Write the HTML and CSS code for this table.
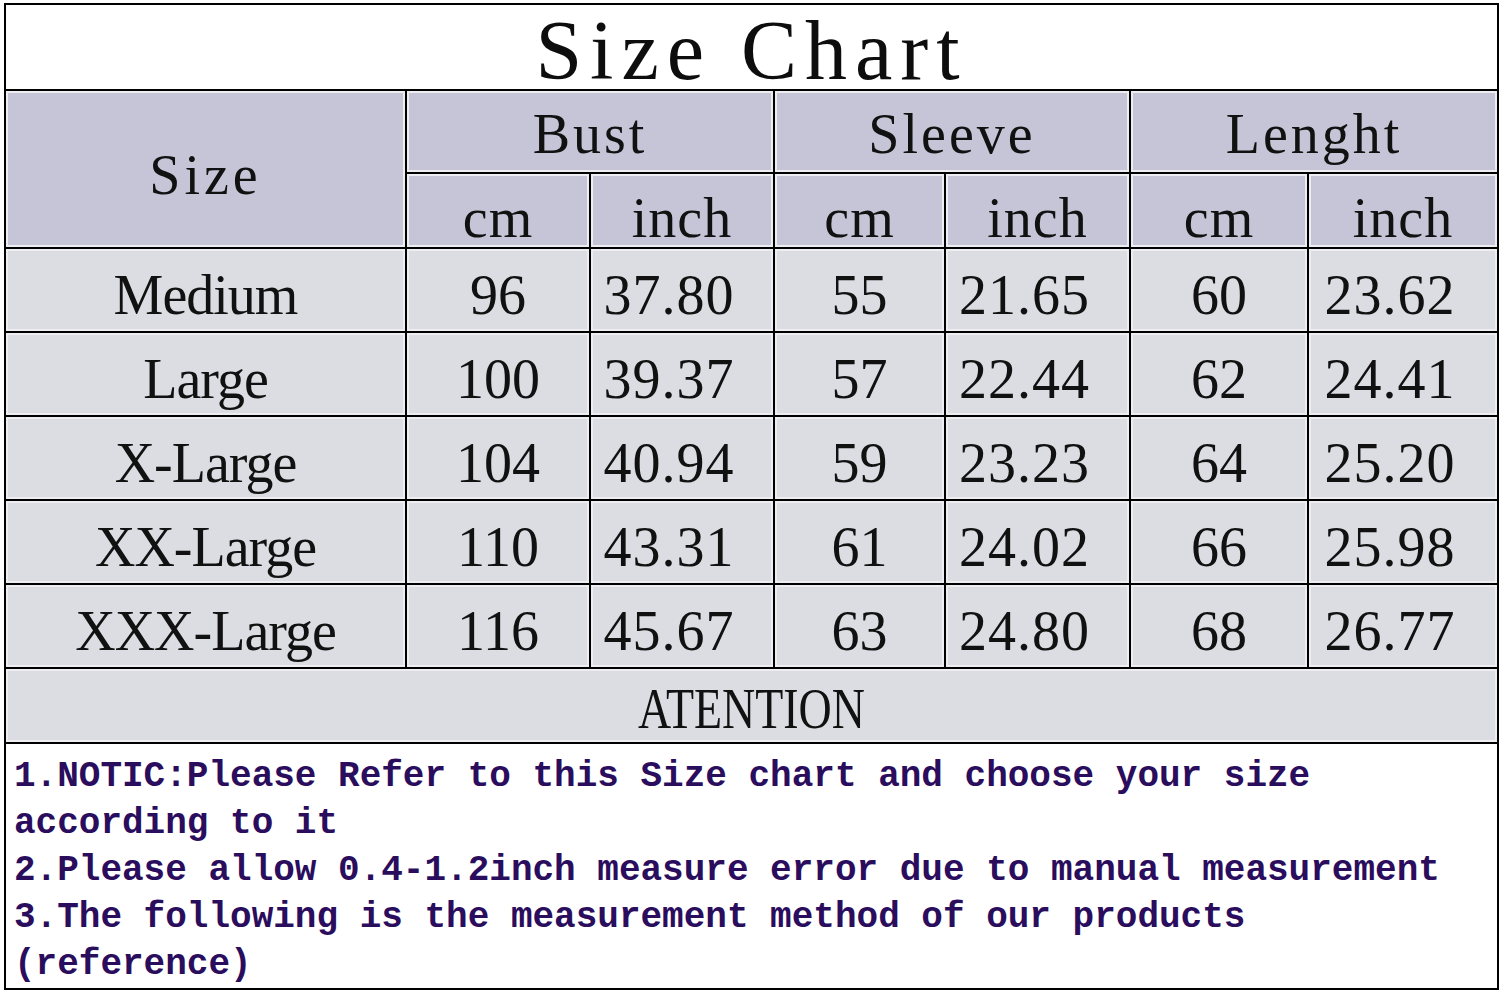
FILE: index.html
```html
<!DOCTYPE html>
<html>
<head>
<meta charset="utf-8">
<link rel="stylesheet" href="styles.css">
</head>
<body>
<div class="page">
<table class="chart">
  <colgroup>
    <col class="c-size"><col class="c-bcm"><col class="c-binch"><col class="c-scm"><col class="c-sinch"><col class="c-lcm"><col class="c-linch">
  </colgroup>
  <tr class="r-title"><td colspan="7" class="title">Size Chart</td></tr>
  <tr class="r-h1">
    <td rowspan="2" class="head size-head">Size</td>
    <td colspan="2" class="head group">Bust</td>
    <td colspan="2" class="head group">Sleeve</td>
    <td colspan="2" class="head group">Lenght</td>
  </tr>
  <tr class="r-h2">
    <td class="head unit">cm</td><td class="head unit">inch</td>
    <td class="head unit">cm</td><td class="head unit">inch</td>
    <td class="head unit">cm</td><td class="head unit">inch</td>
  </tr>
  <tr class="r-data"><td class="name">Medium</td><td class="num">96</td><td class="dec">37.80</td><td class="num">55</td><td class="dec">21.65</td><td class="num">60</td><td class="dec">23.62</td></tr>
  <tr class="r-data"><td class="name">Large</td><td class="num">100</td><td class="dec">39.37</td><td class="num">57</td><td class="dec">22.44</td><td class="num">62</td><td class="dec">24.41</td></tr>
  <tr class="r-data"><td class="name">X-Large</td><td class="num">104</td><td class="dec">40.94</td><td class="num">59</td><td class="dec">23.23</td><td class="num">64</td><td class="dec">25.20</td></tr>
  <tr class="r-data"><td class="name">XX-Large</td><td class="num">110</td><td class="dec">43.31</td><td class="num">61</td><td class="dec">24.02</td><td class="num">66</td><td class="dec">25.98</td></tr>
  <tr class="r-data"><td class="name">XXX-Large</td><td class="num">116</td><td class="dec">45.67</td><td class="num">63</td><td class="dec">24.80</td><td class="num">68</td><td class="dec">26.77</td></tr>
  <tr class="r-att"><td colspan="7" class="attention"><span class="att-text">ATENTION</span></td></tr>
  <tr class="r-notes"><td colspan="7" class="notes">
    <div class="note-line">1.NOTIC:Please Refer to this Size chart and choose your size</div>
    <div class="note-line">according to it</div>
    <div class="note-line">2.Please allow 0.4-1.2inch measure error due to manual measurement</div>
    <div class="note-line">3.The following is the measurement method of our products</div>
    <div class="note-line">(reference)</div>
  </td></tr>
</table>
</div>
</body>
</html>
```
FILE: styles.css
```css
html, body {
  margin: 0;
  padding: 0;
  background: #ffffff;
}
.page {
  padding: 3px 0 0 4px;
}
.chart {
  border-collapse: collapse;
  table-layout: fixed;
  width: 1493px;
  font-family: "Liberation Serif", "Times New Roman", serif;
  color: #111;
}
.c-size { width: 401px; }
.c-bcm { width: 184px; }
.c-binch { width: 184px; }
.c-scm { width: 171px; }
.c-sinch { width: 185px; }
.c-lcm { width: 178px; }
.c-linch { width: 190px; }

.chart td {
  border: 2px solid #000;
  padding: 0;
  text-align: center;
  vertical-align: middle;
  box-shadow: inset 0 0 0 2px #eeeef2;
  white-space: nowrap;
}
.r-title { height: 86px; }
.r-h1 { height: 83px; }
.r-h2 { height: 75px; }
.r-data { height: 84px; }
.r-att { height: 75px; }
.r-notes { height: 246px; }

.chart .title {
  background: #fff;
  font-size: 84px;
  letter-spacing: 8px;
  line-height: 76px;
  padding-top: 8px;
  box-shadow: none;
  color: #0d0d0d;
}
.head {
  background: #c5c5d7;
  font-size: 56px;
  line-height: 1;
}
.chart .size-head { letter-spacing: 4px; padding-top: 12px; }
.chart .group { letter-spacing: 3px; padding-top: 4px; }
.chart .unit { padding-top: 14px; letter-spacing: 1px; }

.chart .r-data td {
  background: #dcdde3;
  font-size: 56px;
  line-height: 1;
  padding-top: 10px;
}
.chart .r-data .name { letter-spacing: -1px; }
.chart .r-data .dec { padding-right: 26px; letter-spacing: 1px; }

.chart .attention {
  background: #dcdde3;
  padding-top: 6px;
}
.att-text {
  display: inline-block;
  font-size: 56px;
  line-height: 1;
  transform: scaleX(0.82);
}
.chart .notes {
  background: #fff;
  text-align: left;
  vertical-align: top;
  box-shadow: none;
  padding: 9px 0 0 8px;
  font-family: "Liberation Mono", "Courier New", monospace;
  font-weight: bold;
  font-size: 36px;
  line-height: 47px;
  color: #2b0d5e;
}
.note-line { white-space: pre; }
```
